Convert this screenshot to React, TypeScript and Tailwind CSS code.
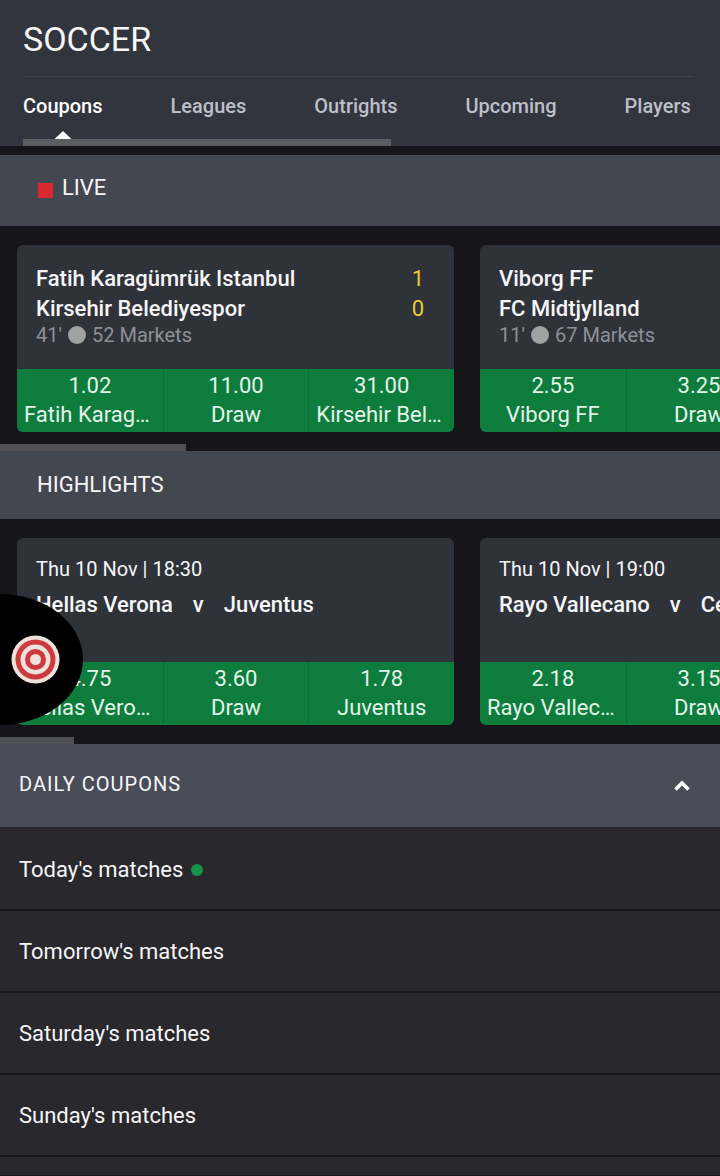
import { useState } from "react";

const tabs = ["Coupons", "Leagues", "Outrights", "Upcoming", "Players"];

type Odd = { price: string; name: string };

const liveMatches = [
  {
    home: "Fatih Karagümrük Istanbul", away: "Kirsehir Belediyespor", score: ["1", "0"], time: "41'", markets: 52,
    odds: [{ price: "1.02", name: "Fatih Karagümrük Istanbul" }, { price: "11.00", name: "Draw" }, { price: "31.00", name: "Kirsehir Belediyespor" }],
  },
  {
    home: "Viborg FF", away: "FC Midtjylland", score: ["0", "0"], time: "11'", markets: 67,
    odds: [{ price: "2.55", name: "Viborg FF" }, { price: "3.25", name: "Draw" }, { price: "2.70", name: "FC Midtjylland" }],
  },
];

const highlights = [
  {
    home: "Hellas Verona", away: "Juventus", date: "Thu 10 Nov | 18:30",
    odds: [{ price: "4.75", name: "Hellas Verona" }, { price: "3.60", name: "Draw" }, { price: "1.78", name: "Juventus" }],
  },
  {
    home: "Rayo Vallecano", away: "Celta Vigo", date: "Thu 10 Nov | 19:00",
    odds: [{ price: "2.18", name: "Rayo Vallecano" }, { price: "3.15", name: "Draw" }, { price: "3.40", name: "Celta Vigo" }],
  },
];

const coupons = [
  { label: "Today's matches", live: true },
  { label: "Tomorrow's matches", live: false },
  { label: "Saturday's matches", live: false },
  { label: "Sunday's matches", live: false },
];

function OddsRow({ odds }: { odds: Odd[] }) {
  return (
    <div className="grid grid-cols-3 h-[63px] bg-[#0d7c3d]">
      {odds.map((o) => (
        <button key={o.name} className="flex flex-col min-w-0 px-[7px] pt-[2px] text-center text-[22px] leading-[29px] text-[#e4f6ea] border-[#0a6b35] not-first:border-l">
          <span className="block w-full">{o.price}</span>
          <span className="block w-full truncate">{o.name}</span>
        </button>
      ))}
    </div>
  );
}

export default function App() {
  const [activeTab, setActiveTab] = useState("Coupons");
  const [open, setOpen] = useState(true);

  return (
    <div className="min-h-screen bg-[#15151a] text-[#f6f6f8] font-['Roboto',sans-serif]">
      {/* Header */}
      <header className="bg-[#32353d] pl-[23px] pr-7">
        <h1 className="h-[76px] pt-[19px] text-[34px] leading-[40px]">SOCCER</h1>
        <nav className="border-t border-[#42454e] overflow-x-auto [scrollbar-width:none]">
          <div className="flex gap-[68px] h-[62px]">
            {tabs.map((tab) => (
              <button key={tab} onClick={() => setActiveTab(tab)}
                className={`relative shrink-0 flex items-start pt-4 text-[20px] leading-[26px] font-medium ${tab === activeTab ? "text-white" : "text-[#bdbfc9]"}`}>
                {tab}
                {tab === activeTab && (
                  <svg className="absolute bottom-0 left-1/2 -translate-x-1/2" width="17" height="8" viewBox="0 0 17 8">
                    <path d="M0 8 8.5 0 17 8Z" fill="#fff" />
                  </svg>
                )}
              </button>
            ))}
          </div>
        </nav>
        <div className="h-[7px] w-[55%] bg-[#5b5e60]" />
      </header>

      {/* Live */}
      <section className="mt-[9px]">
        <h2 className="flex items-center gap-[9px] h-[71px] pl-[38px] pb-[6px] bg-[#444650] text-[22px]">
          <span className="size-[15px] mt-[6px] bg-[#d9292f]" /> LIVE
        </h2>
        <div className="flex gap-[26px] pt-[19px] pb-3 pl-[17px] overflow-x-auto [scrollbar-width:none]">
          {liveMatches.map((m) => (
            <article key={m.home} className="w-[437px] shrink-0 rounded-md overflow-hidden bg-[#30323a]">
              <div className="h-[124px] pt-[19px] pl-[19px] pr-[30px]">
                <div className="flex justify-between text-[22px] leading-[30px]">
                  <span className="font-medium">{m.home}</span>
                  <span className="text-[#e9cc2f]">{m.score[0]}</span>
                </div>
                <div className="flex justify-between text-[22px] leading-[30px]">
                  <span className="font-medium">{m.away}</span>
                  <span className="text-[#e9cc2f]">{m.score[1]}</span>
                </div>
                <div className="flex items-center gap-[6px] text-[20px] leading-[22px] text-[#8f9095]">
                  {m.time} <span className="size-[18px] rounded-full bg-[#9fa1a2]" /> {m.markets} Markets
                </div>
              </div>
              <OddsRow odds={m.odds} />
            </article>
          ))}
        </div>
        <div className="h-[7px] w-[186px] bg-[#515154]" />
      </section>

      {/* Highlights */}
      <section className="relative">
        <h2 className="flex items-center h-[68px] pl-[37px] pb-[2px] bg-[#444650] text-[22px]">HIGHLIGHTS</h2>
        <div className="flex gap-[26px] pt-[19px] pb-3 pl-[17px] overflow-x-auto [scrollbar-width:none]">
          {highlights.map((m) => (
            <article key={m.home} className="w-[437px] shrink-0 rounded-md overflow-hidden bg-[#30323a]">
              <div className="h-[124px] pt-4 pl-[19px]">
                <div className="text-[20px] leading-[30px]">{m.date}</div>
                <div className="flex gap-5 pt-[6px] text-[22px] leading-[30px] font-medium whitespace-nowrap">
                  <span>{m.home}</span>
                  <span>v</span>
                  <span>{m.away}</span>
                </div>
              </div>
              <OddsRow odds={m.odds} />
            </article>
          ))}
        </div>
        <div className="h-[7px] w-[74px] bg-[#4d4f52]" />

        {/* Floating game launcher */}
        <button aria-label="Games" className="absolute left-0 bottom-[19px] w-[83px] h-[131px] pl-[11px] bg-black rounded-r-[100%_50%]">
          <svg width="49" height="49" viewBox="0 0 49 49">
            <circle cx="24.5" cy="24.5" r="24" fill="#eee3dc" />
            <circle cx="24.5" cy="24.5" r="20" fill="#cf3a3f" />
            <circle cx="24.5" cy="24.5" r="15" fill="#eee3dc" />
            <circle cx="24.5" cy="24.5" r="10.5" fill="#cf3a3f" />
            <circle cx="24.5" cy="24.5" r="5.5" fill="#eee3dc" />
          </svg>
        </button>
      </section>

      {/* Daily coupons */}
      <section className="bg-[#29282d]">
        <h2>
          <button onClick={() => setOpen(!open)} aria-expanded={open}
            className="flex items-center justify-between w-full h-[83px] pl-[19px] pr-[30px] pb-1 bg-[#4a4c58] text-[20px] tracking-wider">
            DAILY COUPONS
            <svg className={open ? "mt-1" : "mt-1 rotate-180"} width="16" height="12" viewBox="0 0 16 12" fill="none">
              <path d="M1.5 9.5 8 3l6.5 6.5" stroke="#fff" strokeWidth="3.6" />
            </svg>
          </button>
        </h2>
        {open && (
          <ul className="pt-[2px] pb-[18px]">
            {coupons.map((c) => (
              <li key={c.label} className="h-[82px] border-b-2 border-[#17171b]">
                <a href="#" className="flex items-center gap-2 h-full pl-[19px] text-[22px]">
                  {c.label}
                  {c.live && <span className="size-3 mt-[2px] rounded-full bg-[#14954b]" />}
                </a>
              </li>
            ))}
          </ul>
        )}
      </section>
    </div>
  );
}
